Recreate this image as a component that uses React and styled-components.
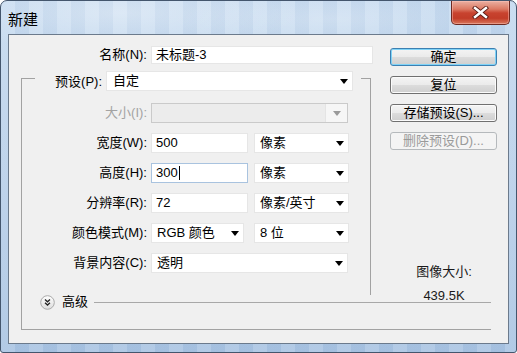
import React from 'react';
import styled, { createGlobalStyle } from 'styled-components';

const GlobalStyle = createGlobalStyle`
  html, body {
    margin: 0;
    padding: 0;
    background: #ffffff;
  }
  body {
    font-family: "Liberation Sans", "Noto Sans CJK SC", sans-serif;
    font-size: 13px;
    color: #000;
  }
`;

const Window = styled.div`
  width: 517px;
  height: 353px;
  box-sizing: border-box;
  display: flex;
  flex-direction: column;
  border: 1px solid #44566d;
  border-radius: 7px 7px 3px 3px;
  overflow: hidden;
  background:
    radial-gradient(ellipse 180px 40px at 120px 12px, rgba(255, 255, 255, 0.35), transparent),
    radial-gradient(ellipse 160px 30px at 330px 18px, rgba(255, 255, 255, 0.25), transparent),
    repeating-linear-gradient(90deg, rgba(255, 255, 255, 0.12) 0 14px, rgba(120, 150, 190, 0.08) 14px 28px),
    linear-gradient(180deg, #c4d9ef 0%, #b8cfe9 45%, #a8c3e2 100%);
`;

const TitleBar = styled.div`
  height: 33px;
  flex: none;
  display: flex;
  align-items: flex-start;
  padding-left: 7px;
  padding-right: 6px;
`;

const Title = styled.div`
  margin-top: 8px;
  font-family: "Noto Sans CJK SC", sans-serif;
  font-size: 15px;
  line-height: 20px;
  color: #000;
`;

const CloseButton = styled.div`
  margin-left: auto;
  width: 59px;
  height: 24px;
  box-sizing: border-box;
  border: 1px solid #6e2a22;
  border-top: none;
  border-radius: 0 0 5px 5px;
  display: flex;
  align-items: center;
  justify-content: center;
  background: linear-gradient(180deg, #eab0a2 0%, #dc7a64 35%, #c8432f 52%, #c23c28 75%, #d8775c 100%);
  box-shadow: inset 0 0 0 1px rgba(255, 200, 190, 0.45);
`;

const Client = styled.div`
  height: 310px;
  margin: 0 7px;
  box-sizing: border-box;
  border: 1px solid #6b7a8c;
  background: #f0f0f0;
  display: flex;
  flex-direction: column;
`;

const Upper = styled.div`
  display: flex;
`;

const LeftCol = styled.div`
  width: 371px;
  display: flex;
  flex-direction: column;
`;

const FormRow = styled.div`
  display: grid;
  grid-template-columns: ${p => p.$label}px auto auto;
  column-gap: ${p => p.$gap || 4}px;
  align-items: center;
  justify-content: start;
  height: ${p => p.$h || 20}px;
`;

const NameRow = styled(FormRow)`
  margin-top: 11px;
`;

const Label = styled.div`
  text-align: right;
  white-space: nowrap;
  line-height: 16px;
  color: ${p => (p.$disabled ? '#a3a3a3' : '#000')};
`;

const Field = styled.div`
  width: ${p => p.$w}px;
  height: ${p => p.$h || 20}px;
  box-sizing: border-box;
  background: #ffffff;
  border: 1px solid ${p => (p.$focus ? '#a9c3df' : '#e6e6e6')};
  display: flex;
  align-items: center;
  padding: 0 4px 0 ${p => p.$pad || 4}px;
  line-height: 16px;
  white-space: nowrap;
`;

const SelectBox = styled(Field)`
  justify-content: space-between;
  background: ${p => (p.$disabled ? '#ececec' : '#ffffff')};
  border-color: ${p => (p.$disabled ? '#cacaca' : '#e6e6e6')};
  padding-right: ${p => (p.$disabled ? 0 : 4)}px;
`;

const Arrow = styled.span`
  width: 0;
  height: 0;
  border-left: 4.5px solid transparent;
  border-right: 4.5px solid transparent;
  border-top: 5px solid ${p => (p.$disabled ? '#9a9a9a' : '#000')};
`;

const DisabledArrowCell = styled.div`
  width: 21px;
  align-self: stretch;
  background: #f6f6f6;
  border-left: 1px solid #e4e4e4;
  display: flex;
  align-items: center;
  justify-content: center;
`;

const Caret = styled.span`
  display: inline-block;
  width: 1px;
  height: 14px;
  background: #000;
  margin-left: 1px;
`;

const UpperFrame = styled.div`
  margin-top: 7px;
  margin-left: 12px;
  width: 350px;
  display: flex;
  flex-direction: column;
`;

const HeaderRow = styled.div`
  display: flex;
  height: 22px;
`;

const Corner = styled.div`
  width: ${p => p.$w}px;
  margin-top: 7px;
  margin-left: ${p => p.$ml || 0}px;
  border-top: 1px solid #a2a2a2;
  border-${p => p.$side}: 1px solid #a2a2a2;
  box-sizing: border-box;
`;

const HeaderLabel = styled(Label)`
  width: 67px;
  align-self: center;
  margin-right: 4px;
`;

const FrameBody = styled.div`
  border-left: 1px solid #a2a2a2;
  border-right: 1px solid #a2a2a2;
  padding: 10px 0 22px;
  display: flex;
  flex-direction: column;
  gap: 10px;
`;

const Pair = styled.div`
  margin-left: ${p => p.$ml}px;
`;

const RightCol = styled.div`
  margin-left: 10px;
  width: 107px;
  padding-top: 13px;
  display: flex;
  flex-direction: column;
  gap: 10px;
`;

const Button = styled.div`
  height: 18px;
  box-sizing: border-box;
  border: 1px solid ${p => (p.$default ? '#3c7fb1' : p.$disabled ? '#b5b9bc' : '#707070')};
  border-radius: 3px;
  display: flex;
  align-items: center;
  justify-content: center;
  line-height: 16px;
  color: ${p => (p.$disabled ? '#9a9a9a' : '#000')};
  background: ${p =>
    p.$disabled
      ? '#f4f4f4'
      : 'linear-gradient(180deg, #f4f4f4 0%, #ebebeb 48%, #dcdcdc 52%, #cfcfcf 100%)'};
  box-shadow: ${p =>
    p.$default ? 'inset 0 0 0 1px #7fd3f7' : p.$disabled ? 'none' : 'inset 0 0 0 1px #fbfbfb'};
`;

const ImageSize = styled.div`
  margin-top: auto;
  margin-bottom: -13px;
  text-align: center;
  line-height: 24px;
  color: #1a1a1a;
  padding-left: 1px;
`;

const AdvancedFrame = styled.div`
  margin-left: 12px;
  width: 470px;
  box-sizing: border-box;
  border-left: 1px solid #a2a2a2;
  border-bottom: 1px solid #a2a2a2;
  padding-bottom: 20px;
`;

const AdvancedRow = styled.div`
  height: 14px;
  display: flex;
  align-items: center;
  padding-left: 18px;
`;

const AdvancedText = styled.span`
  margin-left: 7px;
  line-height: 14px;
`;

const Rule = styled.div`
  flex: 1;
  height: 1px;
  margin-left: 6px;
  background: #a8a8a8;
`;

function Select({ w, children, pad, disabled }) {
  if (disabled) {
    return (
      <SelectBox $w={w} $disabled>
        <span />
        <DisabledArrowCell>
          <Arrow $disabled />
        </DisabledArrowCell>
      </SelectBox>
    );
  }
  return (
    <SelectBox $w={w} $pad={pad}>
      <span>{children}</span>
      <Arrow />
    </SelectBox>
  );
}

function CloseIcon() {
  return (
    <svg width="17" height="13" viewBox="0 0 17 13">
      <path d="M3 2 L14 11 M14 2 L3 11" stroke="#5a1e18" strokeWidth="4.2" strokeLinecap="square" />
      <path d="M3 2 L14 11 M14 2 L3 11" stroke="#ffffff" strokeWidth="2.4" strokeLinecap="square" />
    </svg>
  );
}

function ExpandIcon() {
  return (
    <svg width="15" height="15" viewBox="0 0 15 15">
      <defs>
        <linearGradient id="adv" x1="0" y1="0" x2="0" y2="1">
          <stop offset="0" stopColor="#ffffff" />
          <stop offset="1" stopColor="#dcdcdc" />
        </linearGradient>
      </defs>
      <circle cx="7.5" cy="7.5" r="6.8" fill="url(#adv)" stroke="#a9a9a9" />
      <path d="M5 4.5 L7.5 6.8 L10 4.5 M5 7.7 L7.5 10 L10 7.7" fill="none" stroke="#222" strokeWidth="1.3" />
    </svg>
  );
}

const dims = [
  { label: '宽度(W):', value: '500', unit: '像素' },
  { label: '高度(H):', value: '300', unit: '像素', focus: true },
  { label: '分辨率(R):', value: '72', unit: '像素/英寸' },
];

export default function App() {
  return (
    <>
      <GlobalStyle />
      <Window>
        <TitleBar>
          <Title>新建</Title>
          <CloseButton>
            <CloseIcon />
          </CloseButton>
        </TitleBar>
        <Client>
          <Upper>
            <LeftCol>
              <NameRow $label={138} $h={18}>
                <Label>名称(N):</Label>
                <Field $w={222} $h={18}>未标题-3</Field>
              </NameRow>
              <UpperFrame>
                <HeaderRow>
                  <Corner $w={14} $side="left" />
                  <HeaderLabel>预设(P):</HeaderLabel>
                  <Select w={247} pad={6}>自定</Select>
                  <Corner $w={10} $ml={8} $side="right" />
                </HeaderRow>
                <FrameBody>
                  <FormRow $label={125}>
                    <Label $disabled>大小(I):</Label>
                    <Select w={197} disabled />
                  </FormRow>
                  {dims.map(d => (
                    <FormRow $label={125} key={d.label}>
                      <Label>{d.label}</Label>
                      <Field $w={97} $focus={d.focus}>
                        {d.value}
                        {d.focus && <Caret />}
                      </Field>
                      <Pair $ml={2}>
                        <Select w={95} pad={5}>{d.unit}</Select>
                      </Pair>
                    </FormRow>
                  ))}
                  <FormRow $label={125}>
                    <Label>颜色模式(M):</Label>
                    <Select w={93} pad={5}>RGB 颜色</Select>
                    <Pair $ml={6}>
                      <Select w={95} pad={5}>8 位</Select>
                    </Pair>
                  </FormRow>
                  <FormRow $label={125}>
                    <Label>背景内容(C):</Label>
                    <Select w={197} pad={5}>透明</Select>
                  </FormRow>
                </FrameBody>
              </UpperFrame>
            </LeftCol>
            <RightCol>
              <Button $default>确定</Button>
              <Button>复位</Button>
              <Button>存储预设(S)...</Button>
              <Button $disabled>删除预设(D)...</Button>
              <ImageSize>
                <div>图像大小:</div>
                <div>439.5K</div>
              </ImageSize>
            </RightCol>
          </Upper>
          <AdvancedFrame>
            <AdvancedRow>
              <ExpandIcon />
              <AdvancedText>高级</AdvancedText>
              <Rule />
            </AdvancedRow>
          </AdvancedFrame>
        </Client>
      </Window>
    </>
  );
}
